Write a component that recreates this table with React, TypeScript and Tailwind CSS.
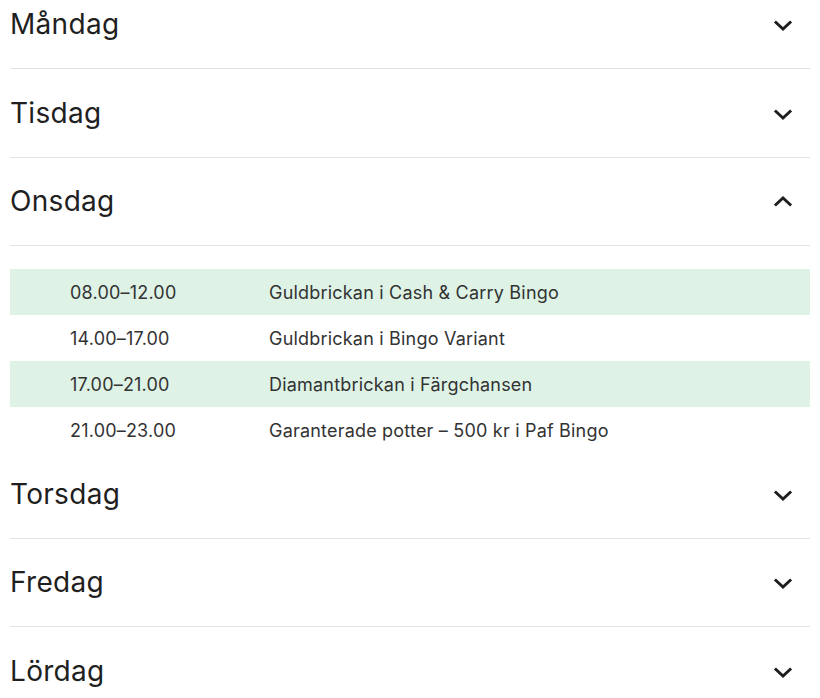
import React, { useState } from 'react';

type Slot = { time: string; event: string };

const days = ['Måndag', 'Tisdag', 'Onsdag', 'Torsdag', 'Fredag', 'Lördag'];

const schedule: Record<string, Slot[]> = {
    Onsdag: [
        { time: '08.00–12.00', event: 'Guldbrickan i Cash & Carry Bingo' },
        { time: '14.00–17.00', event: 'Guldbrickan i Bingo Variant' },
        { time: '17.00–21.00', event: 'Diamantbrickan i Färgchansen' },
        { time: '21.00–23.00', event: 'Garanterade potter – 500 kr i Paf Bingo' },
    ],
};

const Chevron: React.FC<{ up?: boolean }> = ({ up }) => (
    <svg width="24" height="24" viewBox="0 0 24 24" fill="none" className={up ? 'rotate-180' : ''}>
        <path d="M5 9.5l7 6.5 7-6.5" stroke="#1f1f1f" strokeWidth="3" strokeLinecap="square" />
    </svg>
);

const App: React.FC = () => {
    const [open, setOpen] = useState<string | null>('Onsdag');

    return (
        <div className="bg-white min-h-screen px-[10px] overflow-hidden" style={{ fontFamily: 'Inter, Roboto, sans-serif' }}>
            <div className="-mt-[19.5px]">
                {days.map(day => {
                    const isOpen = open === day;
                    const slots = schedule[day] || [];
                    return (
                        <div key={day}>
                            <button
                                onClick={() => setOpen(isOpen ? null : day)}
                                className="w-full flex items-center justify-between py-5 border-b border-[#e3e3e3] text-left"
                            >
                                <span className="h-[47.5px] flex items-center text-[28px] tracking-[0.3px] text-[#1f1f1f] font-normal">{day}</span>
                                <span className="pr-[15px] pt-[2px]">
                                    <Chevron up={isOpen} />
                                </span>
                            </button>
                            {isOpen && (
                                <div className="pt-[23px] -mb-[3px]">
                                    <table className="w-full text-[18px] tracking-[0.2px] text-[#333]">
                                        <tbody>
                                            {slots.map((s, i) => (
                                                <tr key={s.time} className={i % 2 === 0 ? 'bg-[#def2e6]' : ''}>
                                                    <td className="h-[46px] pl-[60px] w-[259px]">{s.time}</td>
                                                    <td className="h-[46px]">{s.event}</td>
                                                </tr>
                                            ))}
                                        </tbody>
                                    </table>
                                </div>
                            )}
                        </div>
                    );
                })}
            </div>
        </div>
    );
};

export default App;
